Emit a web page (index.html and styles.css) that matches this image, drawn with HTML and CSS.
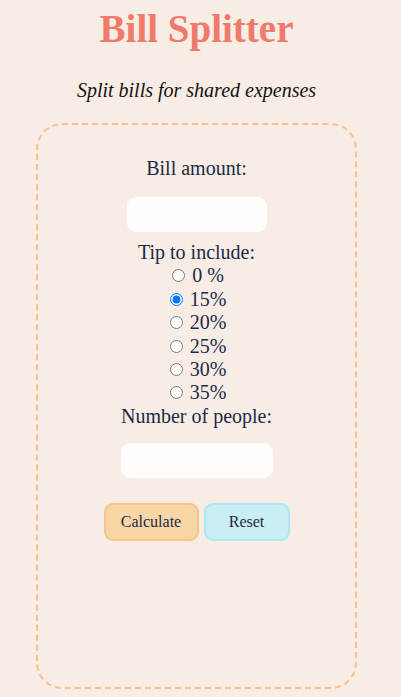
FILE: index.html
```html
<!DOCTYPE html>
<html>
<head>
<meta charset="utf-8">
<title>Bill Splitter</title>
<link rel="stylesheet" href="styles.css">
</head>
<body>
<h1 class="title">Bill Splitter</h1>
<p class="subtitle">Split bills for shared expenses</p>
<div class="card">
  <p class="label label-bill">Bill amount:</p>
  <input class="field field-bill" type="text">
  <div class="tips">
    <div class="tips-title">Tip to include:</div>
    <label class="tip"><input type="radio" name="tip"> 0 %</label><br>
    <label class="tip"><input type="radio" name="tip" checked> 15%</label><br>
    <label class="tip"><input type="radio" name="tip"> 20%</label><br>
    <label class="tip"><input type="radio" name="tip"> 25%</label><br>
    <label class="tip"><input type="radio" name="tip"> 30%</label><br>
    <label class="tip"><input type="radio" name="tip"> 35%</label>
    <div class="tips-title">Number of people:</div>
  </div>
  <input class="field field-people" type="text">
  <div class="buttons">
    <button class="btn btn-calc">Calculate</button>
    <button class="btn btn-reset">Reset</button>
  </div>
</div>
</body>
</html>
```
FILE: styles.css
```css
html {
  background: #f8ede5;
}
body {
  margin: 0 16px 0 8px;
  font-family: "Liberation Serif", "Times New Roman", serif;
  color: #1c2a48;
  text-align: center;
}
.title {
  margin: 6px 0 0;
  font-size: 39px;
  line-height: 46px;
  font-weight: bold;
  color: #ef7a6b;
}
.subtitle {
  margin: 27px 0 0;
  font-size: 20px;
  line-height: 23px;
  font-style: italic;
  color: #111;
}
.card {
  margin: 21px auto 0;
  width: 317px;
  height: 561px;
  border: 2px dashed #f7c08c;
  border-radius: 26px;
  padding-top: 1px;
  box-sizing: content-box;
}
.label {
  margin: 31px 0 0;
  font-size: 20px;
  line-height: 23px;
}
.field {
  display: block;
  margin: 0 auto;
  height: 35px;
  border: none;
  border-radius: 9px;
  background: #fffdfb;
  box-sizing: border-box;
}
.field-bill {
  margin-top: 17px;
  width: 140px;
}
.tips {
  margin-top: 9px;
  font-size: 20px;
  line-height: 23.4px;
}
.tip input {
  margin: 3px 2px 0 3px;
  width: 13px;
  height: 13px;
  vertical-align: 0;
}
.tips-title {
  line-height: 23.4px;
}
.field-people {
  margin-top: 15px;
  width: 152px;
}
.buttons {
  display: flex;
  justify-content: center;
  gap: 5px;
  margin-top: 25px;
}
.btn {
  height: 38px;
  border-radius: 9px;
  font-family: "Liberation Serif", "Times New Roman", serif;
  font-size: 16px;
  color: #1c2a48;
  padding: 0;
}
.btn-calc {
  width: 95px;
  background: #f9d6a6;
  border: 2px solid #f6c58a;
}
.btn-reset {
  width: 86px;
  background: #c9eef3;
  border: 2px solid #aee6f3;
}
```
